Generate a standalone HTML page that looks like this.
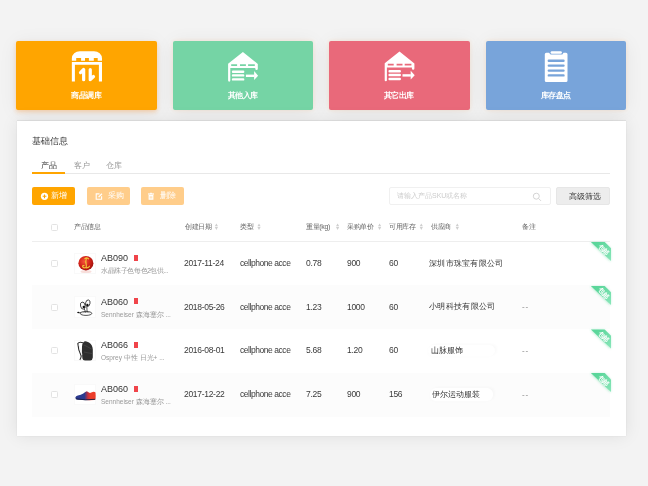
<!DOCTYPE html>
<html><head><meta charset="utf-8">
<style>
*{margin:0;padding:0;box-sizing:border-box}
html,body{width:648px;height:486px;overflow:hidden}
body{-webkit-font-smoothing:antialiased;background:#f3f3f3;font-family:"Liberation Sans",sans-serif;position:relative;color:#333}
.card{position:absolute;top:41px;height:69px;width:140.5px;border-radius:2px;color:#fff}
.lbl{will-change:transform;position:absolute;left:0;right:0;text-align:center;font-size:8px;font-weight:bold;line-height:10px;top:50.3px;letter-spacing:-.6px;text-indent:-.6px}
.c1{left:16px;width:141px;background:#ffa500;box-shadow:0 2px 4px rgba(255,140,30,.32),0 2px 20px rgba(0,0,0,.06)}
.c2{left:173px;width:140px;background:#75d4a5;box-shadow:0 0 4px rgba(255,170,90,.22),0 2px 20px rgba(0,0,0,.065)}
.c3{left:329.3px;width:140.4px;background:#e9697a;box-shadow:0 0 4px rgba(255,170,90,.22),0 2px 20px rgba(0,0,0,.065)}
.c4{left:486px;width:140px;background:#78a4da;box-shadow:0 0 4px rgba(255,170,90,.22),0 2px 20px rgba(0,0,0,.065)}
.panel{position:absolute;left:17px;top:121px;width:609px;height:315px;background:#fff;box-shadow:0 0 16px rgba(0,0,0,.085),0 0 1px rgba(0,0,0,.12),0 -1px 1px rgba(0,0,0,.05)}
.t{position:absolute;white-space:nowrap;line-height:10px;will-change:transform}
.btn{position:absolute;top:187px;height:18px;border-radius:2px;background:#ffa500;color:#fff}
.btn.dis{background:#ffcd8a}
.row{position:absolute;left:32px;width:578px;height:44.2px}
.row.alt{background:#fcfcfc}
.cb{position:absolute;width:7px;height:7px;border:1px solid #e3e3e3;border-radius:1.5px;background:#fff}
.hd{font-size:7px;color:#666;letter-spacing:-.35px}
.cell{font-size:8px;color:#333;font-weight:500}
.num{font-size:8.5px;letter-spacing:-.3px;color:#3a3a3a;margin-top:-.5px;font-weight:400}
.sub{font-size:6.5px;color:#999}
.pic{position:absolute;left:74.3px;width:21.6px;height:21.6px;background:#fff;border:1px solid #f9f9f9}
.code{font-size:9px;color:#333}
.clip{width:50.5px;overflow:hidden}
.tag{position:absolute;width:4.2px;height:6.4px;background:#f0444a}
svg{position:absolute;left:0;top:0}
</style></head><body>

<div class="card c1"><div class="lbl">商品调库</div></div>
<div class="card c2"><div class="lbl">其他入库</div></div>
<div class="card c3"><div class="lbl">其它出库</div></div>
<div class="card c4"><div class="lbl">库存盘点</div></div>

<div class="panel"></div>

<!-- title & tabs -->
<div class="t" style="left:32.4px;top:136px;font-size:9px;color:#333">基础信息</div>
<div class="t" style="left:40.7px;top:160.5px;font-size:7.5px;color:#333">产品</div>
<div class="t" style="left:74px;top:160.5px;font-size:7.5px;color:#999">客户</div>
<div class="t" style="left:106.2px;top:160.5px;font-size:7.5px;color:#999">仓库</div>
<div style="position:absolute;left:32px;top:173px;width:578px;height:1px;background:#e8e8e8"></div>
<div style="position:absolute;left:32.4px;top:172px;width:32.4px;height:2px;background:#ffa500"></div>

<!-- buttons -->
<div class="btn" style="left:32.4px;width:43px;top:187.2px"></div>
<div class="btn dis" style="left:87px;width:43px"></div>
<div class="btn dis" style="left:141px;width:43px"></div>
<div class="t" style="left:51.2px;top:191.2px;font-size:8px;color:#fff">新增</div>
<div class="t" style="left:107.8px;top:191px;font-size:8px;color:#fff">采购</div>
<div class="t" style="left:159.6px;top:191px;font-size:8px;color:#fff">删除</div>

<!-- search -->
<div style="position:absolute;left:389px;top:187px;width:161.5px;height:18px;border:1px solid #f0f0f0;border-radius:2px;background:#fff"></div>
<div class="t" style="left:397px;top:191px;font-size:7px;color:#ccc">请输入产品SKU或名称</div>
<div style="position:absolute;left:556.3px;top:187px;width:53.7px;height:17.5px;border:1px solid #e6e6e6;border-radius:2px;background:#ededed"></div>
<div class="t" style="left:569.3px;top:191.5px;font-size:7.6px;color:#333">高级筛选</div>

<!-- table header -->
<div class="cb" style="left:50.5px;top:223.5px"></div>
<div class="t hd" style="left:73.5px;top:222px">产品信息</div>
<div class="t hd" style="left:184.6px;top:222px">创建日期</div>
<div class="t hd" style="left:239.8px;top:222px">类型</div>
<div class="t hd" style="left:306px;top:222px">重量(kg)</div>
<div class="t hd" style="left:347px;top:222px">采购单价</div>
<div class="t hd" style="left:389.4px;top:222px">可用库存</div>
<div class="t hd" style="left:431px;top:222px">供应商</div>
<div class="t hd" style="left:522.3px;top:222px">备注</div>
<div style="position:absolute;left:32px;top:241px;width:578px;height:1px;background:#eee"></div>

<!-- rows -->
<div class="row" style="top:242px"></div>
<div class="cb" style="left:50.5px;top:260.2px"></div>
<div class="pic" style="top:252.8px"></div>
<div class="t code" style="left:101px;top:253px">AB090</div>
<div class="tag" style="left:134.3px;top:254.5px"></div>
<div class="t sub" style="left:101px;top:266.2px;letter-spacing:-.4px">水晶珠子色每色2包供...</div>
<div class="t cell num" style="left:184px;top:258.5px">2017-11-24</div>
<div class="t cell num" style="left:239.6px;top:258.5px;letter-spacing:-.45px">cellphone acce</div>
<div class="t cell num" style="left:306px;top:258.5px">0.78</div>
<div class="t cell num" style="left:346.5px;top:258.5px">900</div>
<div class="t cell num" style="left:389px;top:258.5px">60</div>
<div class="t cell" style="left:429.3px;top:258.5px;letter-spacing:.3px">深圳市珠宝有限公司</div>
<div class="row alt" style="top:285.3px"></div>
<div class="cb" style="left:50.5px;top:303.7px"></div>
<div class="pic" style="top:296.3px"></div>
<div class="t code" style="left:101px;top:296.5px">AB060</div>
<div class="tag" style="left:134.3px;top:298.0px"></div>
<div class="t sub" style="left:101px;top:309.7px">Sennheiser 森海塞尔 ...</div>
<div class="t cell num" style="left:184px;top:302.0px">2018-05-26</div>
<div class="t cell num" style="left:239.6px;top:302.0px;letter-spacing:-.45px">cellphone acce</div>
<div class="t cell num" style="left:306px;top:302.0px">1.23</div>
<div class="t cell num" style="left:346.5px;top:302.0px">1000</div>
<div class="t cell num" style="left:389px;top:302.0px">60</div>
<div class="t cell" style="left:429.3px;top:302.0px;letter-spacing:.35px">小明科技有限公司</div>
<div class="t cell" style="left:522px;top:302.0px;color:#808080;letter-spacing:.9px">--</div>
<div class="row" style="top:329.5px"></div>
<div class="cb" style="left:50.5px;top:347.2px"></div>
<div class="pic" style="top:339.8px"></div>
<div class="t code" style="left:101px;top:340px">AB066</div>
<div class="tag" style="left:134.3px;top:341.5px"></div>
<div class="t sub" style="left:101px;top:353.2px">Osprey 中性 日光+ ...</div>
<div class="t cell num" style="left:184px;top:345.5px">2016-08-01</div>
<div class="t cell num" style="left:239.6px;top:345.5px;letter-spacing:-.45px">cellphone acce</div>
<div class="t cell num" style="left:306px;top:345.5px">5.68</div>
<div class="t cell num" style="left:346.5px;top:345.5px">1.20</div>
<div class="t cell num" style="left:389px;top:345.5px">60</div>
<div style="position:absolute;left:428px;top:344.6px;width:67px;height:11.8px;border-radius:6px;background:#fff;box-shadow:2px -1px 3px rgba(0,0,0,.022),-1px 1px 3px rgba(0,0,0,.012)"></div>
<div class="t cell" style="left:430.5px;top:345.5px">山脉服饰</div>
<div class="t cell" style="left:522px;top:345.5px;color:#808080;letter-spacing:.9px">--</div>
<div class="row alt" style="top:373px"></div>
<div class="cb" style="left:50.5px;top:391.2px"></div>
<div class="pic" style="top:383.8px"></div>
<div class="t code" style="left:101px;top:384px">AB060</div>
<div class="tag" style="left:134.3px;top:385.5px"></div>
<div class="t sub" style="left:101px;top:397.2px">Sennheiser 森海塞尔 ...</div>
<div class="t cell num" style="left:184px;top:389.5px">2017-12-22</div>
<div class="t cell num" style="left:239.6px;top:389.5px;letter-spacing:-.45px">cellphone acce</div>
<div class="t cell num" style="left:306px;top:389.5px">7.25</div>
<div class="t cell num" style="left:346.5px;top:389.5px">900</div>
<div class="t cell num" style="left:389px;top:389.5px">156</div>
<div style="position:absolute;left:430px;top:388.2px;width:63px;height:12.5px;border-radius:6px;background:#fff;box-shadow:2px -1px 3px rgba(0,0,0,.022),-1px 1px 3px rgba(0,0,0,.012)"></div>
<div class="t cell" style="left:431.6px;top:389.3px;font-size:8.3px">伊尔运动服装</div>
<div class="t cell" style="left:522px;top:389.5px;color:#808080;letter-spacing:.9px">--</div>

<svg width="648" height="486" viewBox="0 0 648 486">
<defs>
<filter id="rs" x="-50%" y="-50%" width="200%" height="200%"><feDropShadow dx="-.4" dy=".4" stdDeviation="1.2" flood-color="#4fd592" flood-opacity=".45"/></filter><linearGradient id="rg" x1="0" y1="0" x2="1" y2="1"><stop offset=".2" stop-color="#5ad69a"/><stop offset="1" stop-color="#8ae6ba"/></linearGradient>
<radialGradient id="ballg" cx=".4" cy=".38" r=".68"><stop offset="0" stop-color="#f5553a"/><stop offset=".55" stop-color="#d2231a"/><stop offset="1" stop-color="#9a0e0a"/></radialGradient>
</defs>
<!-- orange icon -->
<g fill="#fff">
<path d="M71.85 60.7V58.6A8 7.4 0 0 1 79.85 51.2H94A8 7.4 0 0 1 102 58.6V60.7H97.7V58H93.8V60.7H88.9V58H85V60.7H81.1V58H76.2V60.7Z"/>
<path d="M71.85 81.6V61.9H102V81.6H98.9V64.8H74.9V81.6Z"/>
</g>
<g fill="none" stroke="#fff" stroke-width="3.2" stroke-linecap="round" stroke-linejoin="round">
<path d="M80.5 72.6L83.65 69.5V79.7"/>
<path d="M90.25 69.6V79.7L93.5 76.5"/>
</g>
<!-- green & red warehouse -->
<g fill="#fff">
<path d="M242.9 51.9L228.1 63.7V80.6A1.1 1.1 0 0 0 230.3 80.6V67.9H255.3V68.8A1.25 1.25 0 0 0 257.8 68.8V63.9Z M231.2 64.2H237.1V65.9H231.2Z M240 64.2H245.9V65.9H240Z M248.1 64.2H254.8V65.9H248.1Z" fill-rule="evenodd"/>
<g stroke="#fff" stroke-width="2.35" stroke-linecap="round">
<path d="M233 71.7H243.2M233 75.4H243.2M233 79.4H243.2"/>
</g>
<path d="M245.9 74.6H254.3V77H245.9Z"/>
<path d="M254.1 71.1L258.1 75.7L254.1 80Z"/>
</g>
<g fill="#fff" transform="translate(156.6 -0.4)">
<path d="M242.9 51.9L228.1 63.7V80.6A1.1 1.1 0 0 0 230.3 80.6V67.9H255.3V68.8A1.25 1.25 0 0 0 257.8 68.8V63.9Z M231.2 64.2H237.1V65.9H231.2Z M240 64.2H245.9V65.9H240Z M248.1 64.2H254.8V65.9H248.1Z" fill-rule="evenodd"/>
<g stroke="#fff" stroke-width="2.35" stroke-linecap="round">
<path d="M233 71.7H243.2M233 75.4H243.2M233 79.4H243.2"/>
</g>
<path d="M245.9 74.6H254.3V77H245.9Z"/>
<path d="M254.1 71.1L258.1 75.7L254.1 80Z"/>
</g>

<!-- clipboard -->
<g fill="#fff">
<path d="M546.3 52.8H549L550.6 54.6H562.3L563.5 52.8H566A1.5 1.5 0 0 1 567.5 54.3V80.5A1.5 1.5 0 0 1 566 82H546.3A1.5 1.5 0 0 1 544.8 80.5V54.3A1.5 1.5 0 0 1 546.3 52.8Z"/>
<rect x="550.6" y="51.2" width="11.3" height="2.6" rx="1.3"/>
</g>
<g stroke="#78a4da" stroke-width="2.4" stroke-linecap="round">
<path d="M548.8 60.8H563.5M548.8 65.6H563.5M548.8 70.6H563.5M548.8 75.4H563.5"/>
</g>
<path d="M214.8 226.3L216.4 223.4L218.0 226.3Z M214.8 227.1L216.4 230L218.0 227.1Z" fill="#cfcfcf"/>
<path d="M257.4 226.3L259 223.4L260.6 226.3Z M257.4 227.1L259 230L260.6 227.1Z" fill="#cfcfcf"/>
<path d="M336.0 226.3L337.6 223.4L339.20000000000005 226.3Z M336.0 227.1L337.6 230L339.20000000000005 227.1Z" fill="#cfcfcf"/>
<path d="M378.0 226.3L379.6 223.4L381.20000000000005 226.3Z M378.0 227.1L379.6 230L381.20000000000005 227.1Z" fill="#cfcfcf"/>
<path d="M419.7 226.3L421.3 223.4L422.90000000000003 226.3Z M419.7 227.1L421.3 230L422.90000000000003 227.1Z" fill="#cfcfcf"/>
<path d="M455.7 226.3L457.3 223.4L458.90000000000003 226.3Z M455.7 227.1L457.3 230L458.90000000000003 227.1Z" fill="#cfcfcf"/>
<circle cx="44.5" cy="196.3" r="3.6" fill="#fff"/><path d="M44.5 194.4V198.2M42.6 196.3H46.4" stroke="#ffa500" stroke-width="1.1"/>
<g fill="none" stroke="#fff" stroke-width="1.1"><path d="M99.5 193.9H96.2V199.3H101.6V196.2"/><path d="M98.6 197.1L101.9 193.8" stroke-width="1.3"/></g>
<g fill="#fff"><rect x="148" y="193.4" width="6" height="1.2"/><rect x="150" y="192.8" width="2" height="1"/><path d="M148.6 195.1H153.4V199.8H148.6Z M149.8 196.2V198.6H150.5V196.2Z M151.5 196.2V198.6H152.2V196.2Z" fill-rule="evenodd"/></g>
<g fill="none" stroke="#d4d4d4" stroke-width="1"><circle cx="536.3" cy="196.2" r="3"/><path d="M538.5 198.4L541 200.9"/></g>

<g transform="translate(0 0)"><path d="M590.9 242H604.7L611 248.3V261Z" fill="url(#rg)" filter="url(#rs)"/><text x="0" y="0" transform="translate(604.2 249) rotate(45)" font-size="6.3" font-weight="bold" fill="#fff" text-anchor="middle" dominant-baseline="central">包邮</text></g>
<g transform="translate(0 43.9)"><path d="M590.9 242H604.7L611 248.3V261Z" fill="url(#rg)" filter="url(#rs)"/><text x="0" y="0" transform="translate(604.2 249) rotate(45)" font-size="6.3" font-weight="bold" fill="#fff" text-anchor="middle" dominant-baseline="central">包邮</text></g>
<g transform="translate(0 87.4)"><path d="M590.9 242H604.7L611 248.3V261Z" fill="url(#rg)" filter="url(#rs)"/><text x="0" y="0" transform="translate(604.2 249) rotate(45)" font-size="6.3" font-weight="bold" fill="#fff" text-anchor="middle" dominant-baseline="central">包邮</text></g>
<g transform="translate(0 131.1)"><path d="M590.9 242H604.7L611 248.3V261Z" fill="url(#rg)" filter="url(#rs)"/><text x="0" y="0" transform="translate(604.2 249) rotate(45)" font-size="6.3" font-weight="bold" fill="#fff" text-anchor="middle" dominant-baseline="central">包邮</text></g>
<!-- ball -->
<ellipse cx="86" cy="271.5" rx="5.5" ry="1.6" fill="#f5d0cc" opacity=".7"/>
<ellipse cx="85.9" cy="263.2" rx="7.5" ry="7.3" fill="url(#ballg)"/>
<path d="M84.8 258.6Q86.5 257.2 88.6 258.8M86.4 258.4Q85.2 261.5 86.2 264.5Q86.8 267.6 85.2 267.8Q83 268.2 82.6 266.4Q82.8 265.2 84 265.6M85.6 267.8Q88.2 268.3 89.5 266.2" fill="none" stroke="#f0c23a" stroke-width="1.15" stroke-linecap="round"/>
<!-- cartoon -->
<g fill="none" stroke="#1a1a1a" stroke-width=".75">
<ellipse cx="82.8" cy="305.6" rx="2.3" ry="3.6" transform="rotate(-12 82.8 305.6)"/>
<ellipse cx="87.8" cy="303.2" rx="2.2" ry="3.3" transform="rotate(14 87.8 303.2)"/>
<ellipse cx="86" cy="313.4" rx="5.8" ry="2"/>
<path d="M79.3 312.6Q80.5 312.6 81.2 313"/>
<path d="M84.3 309Q85.3 310.8 85.5 312.6M86.8 306.5Q87 309.5 87.1 312.2"/>
</g>
<g fill="#111"><ellipse cx="83.8" cy="307" rx="1.2" ry="1.3"/><ellipse cx="87.4" cy="305" rx="1.1" ry="1.3"/><ellipse cx="78.3" cy="312.5" rx="1.1" ry=".65"/></g>
<path d="M82.5 312.8Q86 311.2 89.5 312.8" stroke="#777" stroke-width=".6" fill="none"/>
<!-- backpack -->
<path d="M83.2 342.5Q84.5 340.8 86.5 341.5Q88 342 89 342.5Q92.5 344.5 92.8 349.5V357.5Q92.6 360.3 90.2 360.6H85Q82.8 360.5 82.4 358.5Q81.5 352 82 346.5Q82.2 343.5 83.2 342.5Z" fill="#2e2e2e"/>
<path d="M84 345Q88 347 91.5 349M84 352Q88 353 92 353.5" stroke="#555" stroke-width=".5" fill="none"/>
<path d="M83 342.7Q79.2 341.4 77.8 343.5Q78.2 350 81.2 356Q81 358.5 79.8 359.8" fill="none" stroke="#2a2a2a" stroke-width="1.1"/>
<path d="M79.2 345.2Q80.3 350.5 82 354.5" stroke="#f0f0f0" stroke-width=".8" fill="none"/>
<!-- shoe -->
<defs><linearGradient id="shg" x1="0" y1="0" x2="1" y2="0"><stop offset=".45" stop-color="#2b3a8f"/><stop offset=".62" stop-color="#c8303a"/><stop offset=".75" stop-color="#ec3d2a"/></linearGradient></defs>
<path d="M75.3 397.6Q75.8 395.8 77.8 395.4Q81 394.8 83.3 393.4Q85.5 391.8 86.9 391.3Q88.5 392.6 90 393Q92 392 93.6 391.7Q95 391.8 95.5 392.4Q95.8 396 95.6 398.6Q95.2 399.8 94.1 400.1Q86 400.3 77.6 399.8Q75.4 399.3 75.3 397.6Z" fill="url(#shg)"/>
<path d="M75.8 398.8Q85 400.6 95.3 399.3" stroke="#151a40" stroke-width=".9" fill="none"/>
</svg>

</body></html>
